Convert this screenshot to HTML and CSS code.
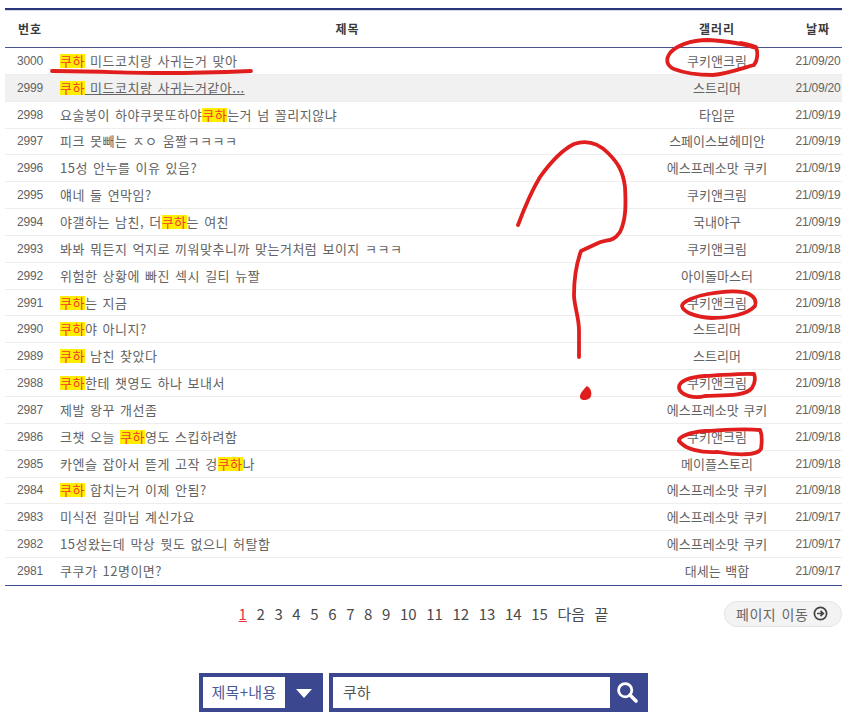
FILE: index.html
```html
<!DOCTYPE html>
<html lang="ko">
<head>
<meta charset="utf-8">
<title>검색 결과</title>
<link rel="stylesheet" href="styles.css">
</head>
<body>
<main class="page">
  <section class="board">
    <div class="row head"><div>번호</div><div class="center">제목</div><div>갤러리</div><div>날짜</div></div>
    <div class="row"><div class="num">3000</div><div class="title"><span class="hl">쿠하</span> 미드코치랑 사귀는거 맞아</div><div class="gal">쿠키앤크림</div><div class="date">21/09/20</div></div>
    <div class="row hover"><div class="num">2999</div><div class="title under"><span class="hl">쿠하</span> 미드코치랑 사귀는거같아...</div><div class="gal">스트리머</div><div class="date">21/09/20</div></div>
    <div class="row"><div class="num">2998</div><div class="title">요술봉이 하야쿠못또하야<span class="hl">쿠하</span>는거 넘 꼴리지않냐</div><div class="gal">타입문</div><div class="date">21/09/19</div></div>
    <div class="row"><div class="num">2997</div><div class="title">피크 못빼는 ㅈㅇ 움짤ㅋㅋㅋㅋ</div><div class="gal">스페이스보헤미안</div><div class="date">21/09/19</div></div>
    <div class="row"><div class="num">2996</div><div class="title">15성 안누를 이유 있음?</div><div class="gal">에스프레소맛 쿠키</div><div class="date">21/09/19</div></div>
    <div class="row"><div class="num">2995</div><div class="title">얘네 둘 연막임?</div><div class="gal">쿠키앤크림</div><div class="date">21/09/19</div></div>
    <div class="row"><div class="num">2994</div><div class="title">야갤하는 남친, 더<span class="hl">쿠하</span>는 여친</div><div class="gal">국내야구</div><div class="date">21/09/19</div></div>
    <div class="row"><div class="num">2993</div><div class="title">봐봐 뭐든지 억지로 끼워맞추니까 맞는거처럼 보이지 ㅋㅋㅋ</div><div class="gal">쿠키앤크림</div><div class="date">21/09/18</div></div>
    <div class="row"><div class="num">2992</div><div class="title">위험한 상황에 빠진 섹시 길티 뉴짤</div><div class="gal">아이돌마스터</div><div class="date">21/09/18</div></div>
    <div class="row"><div class="num">2991</div><div class="title"><span class="hl">쿠하</span>는 지금</div><div class="gal">쿠키앤크림</div><div class="date">21/09/18</div></div>
    <div class="row"><div class="num">2990</div><div class="title"><span class="hl">쿠하</span>야 아니지?</div><div class="gal">스트리머</div><div class="date">21/09/18</div></div>
    <div class="row"><div class="num">2989</div><div class="title"><span class="hl">쿠하</span> 남친 찾았다</div><div class="gal">스트리머</div><div class="date">21/09/18</div></div>
    <div class="row"><div class="num">2988</div><div class="title"><span class="hl">쿠하</span>한테 챗영도 하나 보내서</div><div class="gal">쿠키앤크림</div><div class="date">21/09/18</div></div>
    <div class="row"><div class="num">2987</div><div class="title">제발 왕꾸 개선좀</div><div class="gal">에스프레소맛 쿠키</div><div class="date">21/09/18</div></div>
    <div class="row"><div class="num">2986</div><div class="title">크챗 오늘 <span class="hl">쿠하</span>영도 스킵하려함</div><div class="gal">쿠키앤크림</div><div class="date">21/09/18</div></div>
    <div class="row"><div class="num">2985</div><div class="title">카엔슬 잡아서 뜯게 고작 겅<span class="hl">쿠하</span>나</div><div class="gal">메이플스토리</div><div class="date">21/09/18</div></div>
    <div class="row"><div class="num">2984</div><div class="title"><span class="hl">쿠하</span> 합치는거 이제 안됨?</div><div class="gal">에스프레소맛 쿠키</div><div class="date">21/09/18</div></div>
    <div class="row"><div class="num">2983</div><div class="title">미식전 길마님 계신가요</div><div class="gal">에스프레소맛 쿠키</div><div class="date">21/09/17</div></div>
    <div class="row"><div class="num">2982</div><div class="title">15성왔는데 막상 뭣도 없으니 허탈함</div><div class="gal">에스프레소맛 쿠키</div><div class="date">21/09/17</div></div>
    <div class="row last"><div class="num">2981</div><div class="title">쿠쿠가 12명이면?</div><div class="gal">대세는 백합</div><div class="date">21/09/17</div></div>
  </section>

  <nav class="pager">
    <div class="pages">
      <a class="now">1</a><a>2</a><a>3</a><a>4</a><a>5</a><a>6</a><a>7</a><a>8</a><a>9</a><a>10</a><a>11</a><a>12</a><a>13</a><a>14</a><a>15</a><a>다음</a><a>끝</a>
    </div>
    <button class="move">페이지 이동
      <svg class="move-icon" viewBox="0 0 14 14" width="15" height="15" aria-hidden="true">
        <circle cx="7" cy="7" r="5.7" fill="none" stroke="#444" stroke-width="1.6"/>
        <path d="M3.8 7H9M7 4.6 9.6 7 7 9.4" fill="none" stroke="#444" stroke-width="1.6"/>
      </svg>
    </button>
  </nav>

  <form class="search">
    <div class="select">
      <span class="select-text">제목+내용</span>
      <span class="select-arrow"></span>
    </div>
    <div class="query">
      <span class="query-text">쿠하</span>
      <span class="query-btn">
        <svg viewBox="0 0 22 22" width="22" height="22" aria-hidden="true">
          <circle cx="9.2" cy="9.2" r="6.6" fill="none" stroke="#fff" stroke-width="2.8"/>
          <path d="M14 14 20 20" stroke="#fff" stroke-width="3.6" stroke-linecap="round"/>
        </svg>
      </span>
    </div>
  </form>
</main>

<svg class="scribble" viewBox="0 0 850 721" width="850" height="721" aria-hidden="true">
  <g fill="none" stroke="#e01e1e" stroke-width="3.8" stroke-linecap="round" stroke-linejoin="round">
    <path d="M52 71C90 71 130 73 165 73C195 73 225 72 251 71"/>
    <path d="M756 48C745 44 725 41 708 40C690 40 676 46 670 53C665 60 667 66 674 69C684 73 700 75 713 75C726 74 740 69 754 65C758 60 758 52 756 47C750 45 745 44 741 43"/>
    <path d="M518 225C524 209 531 192 540 177C550 163 562 150 574 144C586 140 598 143 608 153C618 163 623 171 625 187C626 205 626 220 620 232C612 244 606 238 596 244L581 251C577 262 574 280 574 295C574 305 579 318 579 330L579 357"/>
    <path d="M749 294C740 290 725 291 708 294C695 296 682 302 682 306C683 312 695 317 712 318C730 318 748 314 755 306C757 300 753 296 749 294"/>
    <path d="M754 374C745 373 725 375 705 376C690 377 678 381 679 388C681 396 695 399 705 396C720 395 745 397 752 388C756 382 755 376 754 374"/>
    <path d="M760 430C745 428 725 430 705 431C690 432 678 437 679 441C685 449 700 453 718 452C735 455 757 456 761 449C762 442 762 434 760 430"/>
  </g>
  <path d="M587 386C591 388 592 393 591 396C590 400 583 401 581 399C578 396 582 391 587 386Z" fill="#e01e1e"/>
</svg>
</body>
</html>
```
FILE: styles.css
```css
html, body {
  margin: 0;
  padding: 0;
  background: #fff;
}

body {
  font-family: "Noto Sans CJK KR", "Noto Sans", sans-serif;
  color: #636363;
  width: 850px;
  height: 721px;
  overflow: hidden;
  position: relative;
}

.page {
  padding: 8px 8px 0 5px;
}

.board {
  border-top: 2px solid #29367c;
  box-shadow: inset 0 1px 0 #d5d8e6;
  border-bottom: 1px solid #3f4d94;
}

.row {
  display: grid;
  grid-template-columns: 50px 1fr 154px 48px;
  align-items: center;
  height: 26.85px;
  box-sizing: border-box;
  border-bottom: 1px solid #eee;
  font-size: 13px;
  word-spacing: 1px;
  line-height: 16px;
}

.row.last {
  border-bottom: 0;
}

.row.hover {
  background: #f1f1f1;
}

.row.head {
  height: 38px;
  border-bottom: 1px solid #4a5590;
  color: #3a3a3a;
  font-size: 12px;
  font-weight: 700;
  letter-spacing: 1px;
  text-align: center;
}

.num,
.date {
  font-family: "Liberation Sans", sans-serif;
  font-size: 12px;
  letter-spacing: -0.2px;
  text-align: center;
  white-space: nowrap;
  word-spacing: 0;
}

.title {
  padding-left: 5px;
  white-space: nowrap;
  letter-spacing: 0.5px;
}

.title.under {
  text-decoration: underline;
}

.hl {
  display: inline-block;
  line-height: 14px;
  background: #ffee00;
  color: #f2382a;
}

.gal {
  text-align: center;
  white-space: nowrap;
}

.pager {
  display: grid;
  grid-template-columns: 1fr auto 1fr;
  align-items: center;
  margin-top: 15px;
}

.pages {
  grid-column: 2;
  display: flex;
  gap: 9.6px;
  font-size: 15px;
  line-height: 26px;
  color: #4a4a4a;
}

.pages .now {
  color: #e8323c;
  text-decoration: underline;
}

.move {
  grid-column: 3;
  justify-self: end;
  display: flex;
  align-items: center;
  gap: 5px;
  width: 118px;
  height: 26px;
  padding: 0 0 0 11px;
  box-sizing: border-box;
  border: 1px solid #e4e4e4;
  border-radius: 13px;
  background: #f3f3f3;
  font: 14px "Noto Sans CJK KR", sans-serif;
  letter-spacing: 0.5px;
  word-spacing: 1px;
  color: #666;
  white-space: nowrap;
}

.search {
  display: flex;
  justify-content: center;
  gap: 6px;
  margin-top: 46px;
}

.select, .query {
  display: flex;
  height: 39px;
  box-sizing: border-box;
  border: 4px solid #3b4890;
  background: #3b4890;
}

.select {
  width: 124px;
}

.select-text {
  width: 82px;
  background: #fff;
  color: #4c5897;
  font-size: 15px;
  letter-spacing: 0.3px;
  line-height: 30px;
  text-align: center;
  white-space: nowrap;
}

.select-arrow {
  width: 0;
  height: 0;
  margin: 12px 0 0 11px;
  border-left: 8px solid transparent;
  border-right: 8px solid transparent;
  border-top: 9px solid #fff;
}

.query {
  width: 319px;
}

.query-text {
  width: 277px;
  box-sizing: border-box;
  padding-left: 10px;
  background: #fff;
  font-size: 15px;
  line-height: 30px;
  color: #555;
}

.query-btn {
  flex: 1;
  display: flex;
  align-items: center;
  justify-content: center;
}

.scribble {
  position: absolute;
  top: 0;
  left: 0;
  pointer-events: none;
}
```
